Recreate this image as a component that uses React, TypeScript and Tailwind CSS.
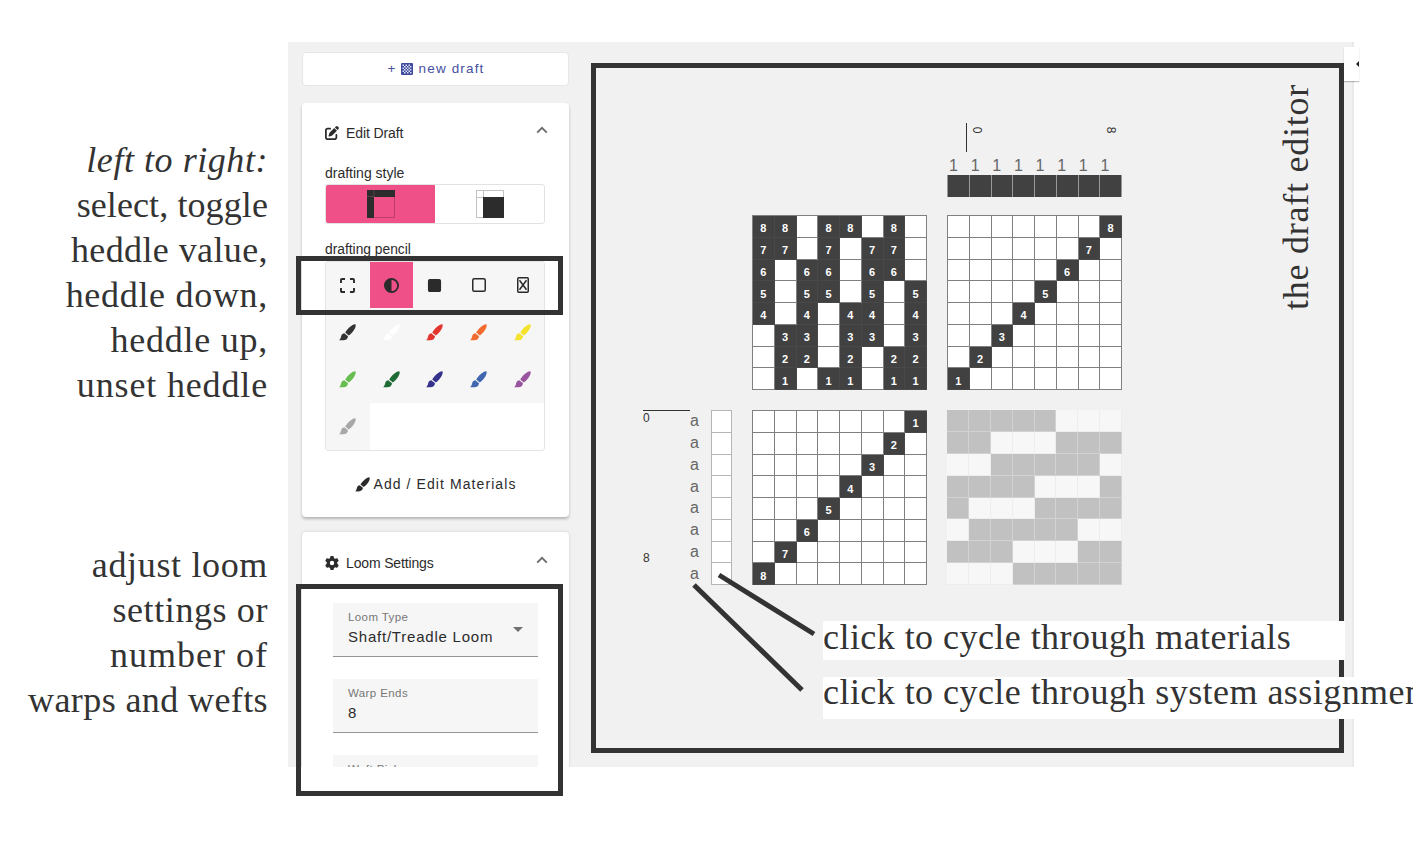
import React from "react";
import { FaPenToSquare, FaGear, FaCircleHalfStroke, FaSquare } from "react-icons/fa6";

const BRUSHES = [
  "text-[#333333]",
  "text-white",
  "text-[#e3342f]",
  "text-[#f26a2e]",
  "text-[#f4e22b]",
  "text-[#67bd4f]",
  "text-[#1f6b35]",
  "text-[#35338c]",
  "text-[#4066b0]",
  "text-[#9a559f]",
  "text-[#a8a8a8]",
];

const THREADING = [
  "88.88.8.",
  "77.7.77.",
  "6.66.66.",
  "5.55.5.5",
  "4.4.44.4",
  ".33.33.3",
  ".22.2.22",
  ".1.11.11",
];
const TIEUP = [
  ".......8",
  "......7.",
  ".....6..",
  "....5...",
  "...4....",
  "..3.....",
  ".2......",
  "1.......",
];
const TREADLING = [
  ".......1",
  "......2.",
  ".....3..",
  "....4...",
  "...5....",
  "..6.....",
  ".7......",
  "8.......",
];
const DRAWDOWN = [
  "11111000",
  "11000111",
  "00111110",
  "11110001",
  "10001111",
  "01111100",
  "11100011",
  "00011111",
];
const EIGHT = [0, 1, 2, 3, 4, 5, 6, 7];

function Draft({ rows }: { rows: string[] }) {
  return (
    <div className="grid h-[175px] w-[175px] shrink-0 grid-cols-8 grid-rows-8 border-t border-l border-[#808080]">
      {rows.flatMap((row, r) =>
        row.split("").map((c, i) => (
          <div
            key={`${r}-${i}`}
            className={
              c === "."
                ? "border-r border-b border-[#808080] bg-white"
                : "flex items-center justify-center border-r border-b border-[#484848] bg-[#414141] pt-[5px] text-[11px] leading-none font-bold text-white"
            }
          >
            {c === "." ? "" : c}
          </div>
        )),
      )}
    </div>
  );
}

function Drawdown() {
  return (
    <div className="grid h-[175px] w-[175px] shrink-0 grid-cols-8 grid-rows-8">
      {DRAWDOWN.flatMap((row, r) =>
        row.split("").map((c, i) => (
          <div
            key={`${r}-${i}`}
            className={
              c === "1"
                ? "border-r border-b border-[#d2d2d2] bg-[#c1c1c1]"
                : "border-r border-b border-[#ededed] bg-[#f7f7f7]"
            }
          />
        )),
      )}
    </div>
  );
}

function Brush({ size }: { size: number }) {
  return (
    <svg width={size} height={size} viewBox="0 0 17 17" fill="currentColor">
      <path d="M16.500.5C17 1.500 16.500 3.500 15.600 5 14 7.800 12 10 9.800 11.400L6.200 8.500C8 5.500 11 2.300 14 .8 15 .4 16 .1 16.500.5z" />
      <path d="M5.300 9.300 9 12.200C9 14.500 7 16.300 4 16.300L.2 16.200C1.800 15 1.800 13.300 2.400 11.600 2.900 10.200 4 9.400 5.300 9.300z" />
    </svg>
  );
}

function Chevron() {
  return (
    <svg width="12" height="8" viewBox="0 0 12 8" fill="none" stroke="#6b6b6b" strokeWidth="1.8">
      <path d="M1.2 6.7 6 1.8l4.8 4.9" />
    </svg>
  );
}

function CheckerIcon() {
  return (
    <svg width="12" height="12" viewBox="0 0 12 12">
      <rect width="12" height="12" rx="1" fill="#3f4a9e" />
      {[0, 1, 2, 3, 4, 5].flatMap((r) =>
        [0, 1, 2].map((c) => (
          <rect
            key={`${r}-${c}`}
            x={1.5 + c * 3 + (r % 2) * 1.5}
            y={1.5 + r * 1.5}
            width="1.5"
            height="1.5"
            fill="#d9dcf0"
          />
        )),
      )}
    </svg>
  );
}

function Field({ label, value, select }: { label: string; value?: string; select?: boolean }) {
  return (
    <div className="flex h-[54px] shrink-0 items-start justify-between border-b border-[#959595] bg-[#f6f6f6] px-[15px]">
      <div className="pt-[8px]">
        <div className="text-[11.5px] leading-[13px] tracking-[0.4px] text-[#777]">{label}</div>
        {value && (
          <div className="pt-[3px] text-[15px] leading-[20px] tracking-[0.78px] text-[#2b2b2b]">{value}</div>
        )}
      </div>
      {select && (
        <svg className="mt-[24px]" width="10" height="5" viewBox="0 0 10 5">
          <path d="M0 0h10L5 5z" fill="#707070" />
        </svg>
      )}
    </div>
  );
}

function Sidebar() {
  return (
    <div className="flex w-[267px] shrink-0 flex-col pt-[10px]">
      <button className="flex h-[34px] shrink-0 items-center justify-center rounded-[4px] border border-[#e6e6e6] bg-white pl-[1px] text-[13.5px] tracking-[1.15px] text-[#4450a0]">
        <span>+</span>
        <span className="mr-[6px] ml-[4px]">
          <CheckerIcon />
        </span>
        <span>new draft</span>
      </button>

      <section className="mt-[17px] h-[414px] shrink-0 rounded-[4px] bg-white px-[23px] shadow-[0_2px_3px_rgba(0,0,0,0.25)]">
        <div className="flex h-[60px] items-center text-[14px] text-[#2b2b2b]">
          <FaPenToSquare size={14} />
          <span className="ml-[7px] grow tracking-[-0.1px]">Edit Draft</span>
          <span className="mr-[-2px] mb-[6px]">
            <Chevron />
          </span>
        </div>
        <div className="h-[21px] pt-[2px] text-[14px] leading-[17px] text-[#2b2b2b]">drafting style</div>
        <div className="flex h-[40px] w-[220px] overflow-hidden rounded-[3px] border border-[#e2e2e2]">
          <div className="flex w-1/2 items-center justify-center bg-[#ef5087]">
            <svg width="28" height="28" viewBox="0 0 28 28">
              <path d="M0 0h28v7H7v21H0z" fill="#2c2c2c" />
              <path d="M0 6.5h7M7 0v7" stroke="#5a4048" fill="none" />
              <path d="M7 27.5h20.500V7" stroke="#c03c6c" fill="none" />
            </svg>
          </div>
          <div className="flex w-1/2 items-center justify-center">
            <svg width="28" height="28" viewBox="0 0 28 28">
              <path d="M.5.5h27v7h-27zM.5.5h7v27h-7z" fill="none" stroke="#c2c2c2" />
              <path d="M7 7h21v21H7z" fill="#2c2c2c" />
            </svg>
          </div>
        </div>
        <div className="h-[37px] pt-[17px] text-[13.8px] leading-[17px] text-[#2b2b2b]">drafting pencil</div>
        <div className="grid h-[190px] w-[220px] grid-cols-5 grid-rows-[46px_48px_47px_47px] overflow-hidden rounded-[3px] border border-[#e4e4e4] text-[#2b2b2b]">
          <div className="flex items-center justify-center bg-[#f6f6f6]">
            <svg width="15" height="15" viewBox="0 0 15 15" fill="none" stroke="#2b2b2b" strokeWidth="1.9">
              <path d="M1 5V2q0-1 1-1h3M10 1h3q1 0 1 1v3M14 10v3q0 1-1 1h-3M5 14H2q-1 0-1-1v-3" />
            </svg>
          </div>
          <div className="flex items-center justify-center bg-[#ef5087]">
            <FaCircleHalfStroke size={15} />
          </div>
          <div className="flex items-center justify-center bg-[#f6f6f6]">
            <FaSquare size={15} />
          </div>
          <div className="flex items-center justify-center bg-[#f6f6f6] pl-px">
            <svg width="14" height="14" viewBox="0 0 14 14" fill="none" stroke="#2b2b2b" strokeWidth="1.5">
              <rect x=".75" y=".75" width="12.500" height="12.500" rx="1.500" />
            </svg>
          </div>
          <div className="flex items-center justify-center bg-[#f6f6f6] pl-px">
            <svg width="12" height="16" viewBox="0 0 12 16" fill="none" stroke="#2b2b2b" strokeWidth="1.5">
              <rect x=".75" y=".75" width="10.500" height="14.500" rx="1" />
              <path d="m2.500 3.200 7 9.600M9.500 3.200l-7 9.600" />
            </svg>
          </div>
          {BRUSHES.map((color) => (
            <div key={color} className={`flex items-center justify-center bg-[#f6f6f6] ${color}`}>
              <Brush size={17} />
            </div>
          ))}
        </div>
        <div className="mt-[22px] flex h-[22px] items-center justify-center text-[14px] tracking-[1.08px] text-[#2b2b2b]">
          <Brush size={15} />
          <span className="ml-[4px]">Add / Edit Materials</span>
        </div>
      </section>

      <section className="mt-[15px] h-[300px] shrink-0 rounded-[4px] bg-white px-[23px] shadow-[0_0_3px_rgba(0,0,0,0.15)]">
        <div className="flex h-[62px] items-center text-[14px] text-[#2b2b2b]">
          <FaGear size={14} />
          <span className="ml-[7px] grow tracking-[-0.15px]">Loom Settings</span>
          <span className="mr-[-2px] mb-[6px]">
            <Chevron />
          </span>
        </div>
        <div className="flex flex-col gap-[22px] px-2 pt-[9px]">
          <Field label="Loom Type" value="Shaft/Treadle Loom" select />
          <Field label="Warp Ends" value="8" />
          <Field label="Weft Picks" />
        </div>
      </section>
    </div>
  );
}

function DraftEditor() {
  return (
    <div className="flex w-[553px] shrink-0 flex-col items-end">
      <div className="w-[175px] pt-[81px]">
        <div className="ml-[19px] flex h-[29px] items-start border-l border-[#333] pl-[4px] text-[12px] leading-[12px] text-[#333]">
          <span className="flex h-[14px] w-[12px] rotate-90 items-center justify-center">0</span>
          <span className="ml-[122px] flex h-[14px] w-[12px] rotate-90 items-center justify-center">8</span>
        </div>
        <div className="grid w-[175px] grid-cols-8 pt-[5px] pl-[2px] text-[16px] leading-[18px] text-[#666]">
          {EIGHT.map((i) => (
            <span key={i}>1</span>
          ))}
        </div>
        <div className="grid h-[22px] grid-cols-8 border-l border-[#999] pt-0">
          {EIGHT.map((i) => (
            <div key={i} className="border-r border-[#999] bg-[#414141]" />
          ))}
        </div>
      </div>
      <div className="mt-[18px] flex gap-5">
        <Draft rows={THREADING} />
        <Draft rows={TIEUP} />
      </div>
      <div className="mt-5 flex text-[#333]">
        <div className="w-[47px] text-[12px] leading-[14px]">
          <div className="border-t border-[#333]">0</div>
          <div className="pt-[126px]">8</div>
        </div>
        <div className="grid w-[22px] grid-rows-8 text-[16px] text-[#666]">
          {EIGHT.map((i) => (
            <span key={i} className="flex h-[21.8px] items-center leading-none">
              a
            </span>
          ))}
        </div>
        <div className="mr-[20px] ml-[-1px] grid w-[21px] grid-rows-8 border-t border-[#b5b5b5]">
          {EIGHT.map((i) => (
            <div key={i} className="border-x border-b border-[#b5b5b5] bg-white" />
          ))}
        </div>
        <Draft rows={TREADLING} />
        <div className="ml-5">
          <Drawdown />
        </div>
      </div>
    </div>
  );
}

export default function App() {
  return (
    <div className="relative flex h-[848px] w-[1413px] overflow-hidden bg-white font-['Liberation_Sans',Arial,sans-serif]">
      <div className="flex w-[288px] shrink-0 flex-col items-end pt-[138px] pr-[20px] font-['Liberation_Serif','Times_New_Roman',serif] text-[36px] leading-[45px] whitespace-nowrap text-[#333]">
        <div className="tracking-[0.55px] italic">left to right:</div>
        <div className="tracking-[0.1px]">select, toggle</div>
        <div className="tracking-[0.4px]">heddle value,</div>
        <div className="tracking-[0.7px]">heddle down,</div>
        <div className="tracking-[0.75px]">heddle up,</div>
        <div className="tracking-[0.85px]">unset heddle</div>
        <div className="mt-[135px] tracking-[0.65px]">adjust loom</div>
        <div className="tracking-[0.6px]">settings or</div>
        <div className="tracking-[1px]">number of</div>
        <div className="tracking-[0.4px]">warps and wefts</div>
      </div>

      <div className="mt-[42px] flex h-[725px] w-[1066px] shrink-0 overflow-hidden border-r-2 border-[#e9e9e9] bg-[#f1f1f1] pl-[14px]">
        <Sidebar />
        <DraftEditor />
      </div>

      <div className="absolute top-[47px] left-[1344px] flex h-[34px] w-[15px] items-center justify-end bg-white shadow-[0_1px_1px_rgba(0,0,0,0.25)]">
        <svg width="3" height="6" viewBox="0 0 3 6">
          <path d="M3 0v6L0 3z" fill="#222" />
        </svg>
      </div>

      <div className="absolute top-[256px] left-[296px] h-[59px] w-[267px] border-5 border-[#333]" />
      <div className="absolute top-[584px] left-[296px] h-[212px] w-[267px] border-5 border-[#333]" />
      <div className="absolute top-[63px] left-[591px] h-[690px] w-[753px] border-5 border-[#333]" />

      <svg className="absolute top-[570px] left-[685px]" width="140" height="130" viewBox="0 0 140 130">
        <path d="M34 5 129 64M9 15 117 120" stroke="#333" strokeWidth="5" fill="none" />
      </svg>

      <div className="absolute top-[621px] left-[823px] h-[39px] w-[522px] bg-white font-['Liberation_Serif','Times_New_Roman',serif] text-[36px] leading-[32px] tracking-[0.45px] whitespace-nowrap text-[#333]">
        click to cycle through materials
      </div>
      <div className="absolute top-[677px] left-[823px] h-[42px] w-[590px] overflow-hidden bg-white font-['Liberation_Serif','Times_New_Roman',serif] text-[36px] leading-[31px] tracking-[0.45px] whitespace-nowrap text-[#333]">
        click to cycle through system assignments
      </div>
      <div className="absolute top-[84px] left-[1276px] h-[226px] w-[40px] rotate-180 font-['Liberation_Serif','Times_New_Roman',serif] text-[36px] leading-[40px] tracking-[0.75px] whitespace-nowrap text-[#333] [writing-mode:vertical-rl]">
        the draft editor
      </div>
    </div>
  );
}
